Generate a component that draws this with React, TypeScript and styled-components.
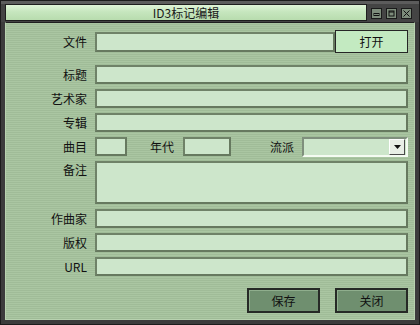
import React from "react";
import styled, { createGlobalStyle } from "styled-components";

const GlobalStyle = createGlobalStyle`
  html, body {
    margin: 0;
    padding: 0;
    background: #3a3a3a;
  }
  body {
    font-family: "Noto Sans CJK SC", "Noto Sans", sans-serif;
    font-size: 12px;
    color: #111;
  }
`;

const Window = styled.div`
  width: 420px;
  height: 325px;
  box-sizing: border-box;
  background: #3c3c3c;
  border: 1px solid #1c1c1c;
  padding: 0 4px 4px 4px;
  display: flex;
  flex-direction: column;
`;

const TitleBar = styled.div`
  height: 21px;
  display: flex;
  align-items: center;
  gap: 4px;
  background: linear-gradient(#5c5c5c 0 3px, #444 3px 100%);
  margin: 0 -4px;
  padding: 0 7px 0 4px;
`;

const TitleField = styled.div`
  flex: 1;
  height: 15px;
  border: 1px solid #1e1e1e;
  background: linear-gradient(#e0f4d8 0%, #c6e6be 45%, #b8dcae 100%);
  display: flex;
  align-items: center;
  justify-content: center;
  font-size: 12px;
  line-height: 1;
  color: #1a1a1a;
  margin-top: 2px;
`;

const WinButtons = styled.div`
  display: flex;
  gap: 4px;
  margin-top: 3px;
`;

const WinButton = styled.div`
  width: 9px;
  height: 9px;
  border: 1px solid #1a1a1a;
  background: #7d8c7b;
  display: flex;
  align-items: center;
  justify-content: center;
`;

const Body = styled.div`
  flex: 1;
  box-sizing: border-box;
  border-top: 1px solid #202020;
  border-left: 1px solid #b8d2b0;
  border-right: 1px solid #b8d2b0;
  border-bottom: 1px solid #b8d2b0;
  background: repeating-linear-gradient(
    #aac6a2 0px,
    #aac6a2 1px,
    #a0bc98 1px,
    #a0bc98 2px
  );
  padding: 7px 6px 6px 0;
  display: flex;
  flex-direction: column;
`;

const Row = styled.div<{ $top?: number; $h?: number; $start?: boolean }>`
  display: flex;
  align-items: ${(p) => (p.$start ? "flex-start" : "center")};
  height: ${(p) => p.$h ?? 19}px;
  margin-top: ${(p) => p.$top ?? 5}px;
`;

const Label = styled.div<{ $pad?: number }>`
  width: 81px;
  flex: none;
  text-align: right;
  padding-right: 8px;
  padding-top: ${(p) => p.$pad ?? 0}px;
  line-height: 14px;
  white-space: nowrap;
`;

const InlineLabel = styled.div<{ $ml: number; $mr: number }>`
  margin-left: ${(p) => p.$ml}px;
  margin-right: ${(p) => p.$mr}px;
  line-height: 14px;
  white-space: nowrap;
`;

const Field = styled.div<{ $w?: number; $h?: number }>`
  box-sizing: border-box;
  flex: ${(p) => (p.$w ? "none" : "1")};
  width: ${(p) => (p.$w ? `${p.$w}px` : "auto")};
  height: ${(p) => p.$h ?? 19}px;
  background: #cde6cb;
  border: 2px solid #66795f;
  border-top-color: #6f8268;
  border-left-color: #6f8268;
`;

const Select = styled.div`
  box-sizing: border-box;
  flex: 1;
  height: 20px;
  background: #cde6cb;
  border-top: 2px solid #7f8f7d;
  border-left: 2px solid #7f8f7d;
  border-right: 2px solid #f4fbf2;
  border-bottom: 2px solid #f4fbf2;
  display: flex;
  justify-content: flex-end;
  padding: 0 1px;
`;

const SelectArrow = styled.div`
  width: 16px;
  height: 16px;
  box-sizing: border-box;
  background: #e8eee6;
  border-top: 1px solid #ffffff;
  border-left: 1px solid #ffffff;
  border-right: 1px solid #4a4a4a;
  border-bottom: 1px solid #4a4a4a;
  display: flex;
  align-items: center;
  justify-content: center;
`;

const OpenButton = styled.div`
  box-sizing: border-box;
  width: 73px;
  height: 23px;
  flex: none;
  background: #c3eac1;
  border: 1px solid #262626;
  display: flex;
  align-items: center;
  justify-content: center;
`;

const Footer = styled.div`
  display: flex;
  justify-content: flex-end;
  gap: 15px;
  margin-top: 12px;
`;

const ActionButton = styled.div`
  box-sizing: border-box;
  width: 73px;
  height: 25px;
  background: #6f8f6f;
  border: 2px solid #262a26;
  box-shadow: inset 1px 1px 0 #8fae8d;
  display: flex;
  align-items: center;
  justify-content: center;
  color: #111;
`;

const App: React.FC = () => {
  return (
    <>
      <GlobalStyle />
      <Window>
        <TitleBar>
          <TitleField>ID3标记编辑</TitleField>
          <WinButtons>
            <WinButton>
              <svg width="7" height="7" viewBox="0 0 7 7">
                <rect x="1" y="3.5" width="5" height="2" fill="none" stroke="#111" strokeWidth="1" />
              </svg>
            </WinButton>
            <WinButton>
              <svg width="7" height="7" viewBox="0 0 7 7">
                <rect x="1" y="1" width="5" height="5" fill="none" stroke="#111" strokeWidth="1" />
                <line x1="1" y1="2" x2="6" y2="2" stroke="#111" strokeWidth="1" />
              </svg>
            </WinButton>
            <WinButton>
              <svg width="7" height="7" viewBox="0 0 7 7">
                <path d="M0.5 0.5 L6.5 6.5 M6.5 0.5 L0.5 6.5" stroke="#111" strokeWidth="1" />
              </svg>
            </WinButton>
          </WinButtons>
        </TitleBar>
        <Body>
          <Row $top={0} $h={23}>
            <Label>文件</Label>
            <Field $h={20} />
            <OpenButton>打开</OpenButton>
          </Row>
          <Row $top={12}>
            <Label>标题</Label>
            <Field />
          </Row>
          <Row>
            <Label>艺术家</Label>
            <Field />
          </Row>
          <Row>
            <Label>专辑</Label>
            <Field />
          </Row>
          <Row>
            <Label>曲目</Label>
            <Field $w={32} />
            <InlineLabel $ml={23} $mr={9}>年代</InlineLabel>
            <Field $w={48} />
            <InlineLabel $ml={39} $mr={8}>流派</InlineLabel>
            <Select>
              <SelectArrow>
                <svg width="7" height="4" viewBox="0 0 7 4">
                  <path d="M0 0 H7 L3.5 4 Z" fill="#111" />
                </svg>
              </SelectArrow>
            </Select>
          </Row>
          <Row $h={43} $start>
            <Label $pad={2}>备注</Label>
            <Field $h={43} />
          </Row>
          <Row>
            <Label>作曲家</Label>
            <Field />
          </Row>
          <Row>
            <Label>版权</Label>
            <Field />
          </Row>
          <Row>
            <Label>URL</Label>
            <Field />
          </Row>
          <Footer>
            <ActionButton>保存</ActionButton>
            <ActionButton>关闭</ActionButton>
          </Footer>
        </Body>
      </Window>
    </>
  );
};

export default App;
